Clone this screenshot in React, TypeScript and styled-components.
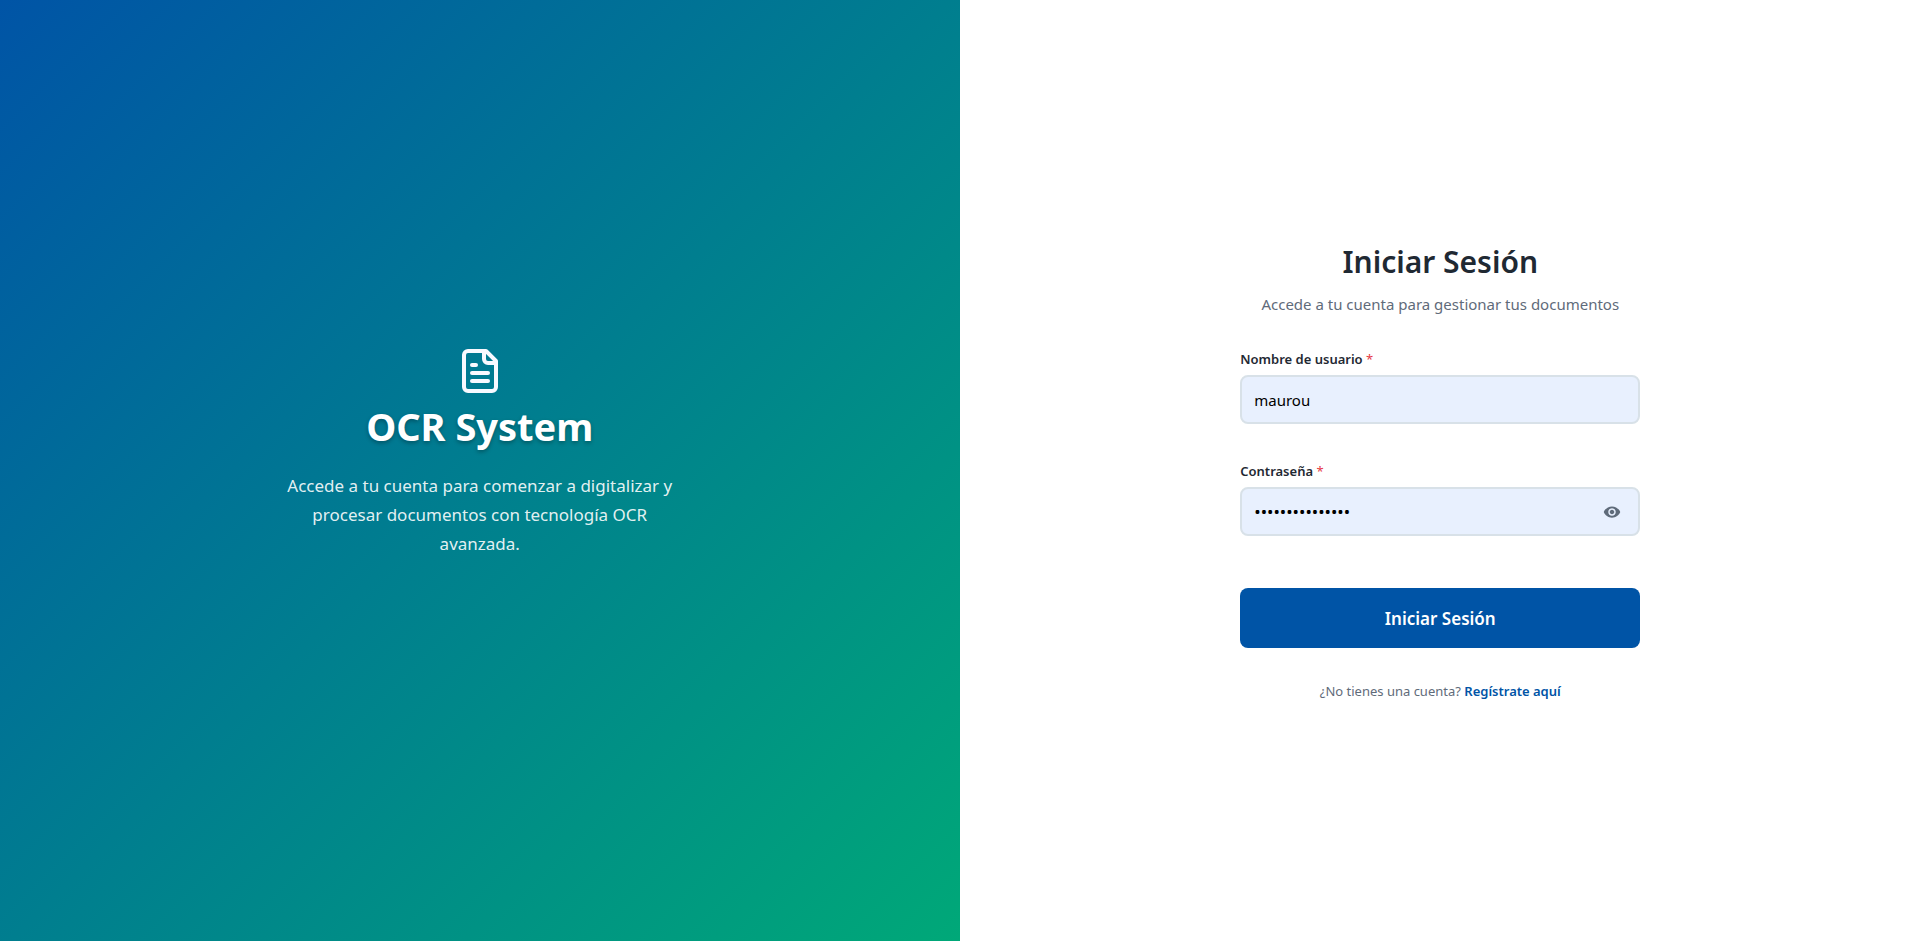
import React, { useState } from "react";
import styled, { createGlobalStyle } from "styled-components";
import { MdVisibility, MdVisibilityOff } from "react-icons/md";

const GlobalStyle = createGlobalStyle`
  *, *::before, *::after { box-sizing: border-box; }
  body {
    margin: 0;
    background: #ffffff;
    color: #1f2933;
    font-family: "Noto Sans", "Open Sans", sans-serif;
  }
  h1, h2, p { margin: 0; }
  input, button { font-family: inherit; }
`;

const Page = styled.div`
  display: grid;
  grid-template-columns: 1fr 1fr;
  min-height: 100vh;
`;

const Brand = styled.section`
  display: flex;
  flex-direction: column;
  align-items: center;
  justify-content: center;
  padding: 32px 32px 68px;
  background: linear-gradient(135deg, #0054a6 0%, #00a878 100%);
  color: #ffffff;
  text-align: center;
`;

const BrandIcon = styled.svg`
  width: 48px;
  height: 48px;
  color: #f8f9ff;
`;

const BrandTitle = styled.h1`
  margin-top: 8px;
  font-size: 38px;
  line-height: 46px;
  font-weight: 700;
  text-shadow: 0 2px 4px rgba(0, 0, 0, 0.3);
`;

const BrandText = styled.p`
  max-width: 400px;
  margin-top: 22px;
  font-size: 17px;
  line-height: 29px;
  color: rgba(255, 255, 255, 0.9);
`;

const Access = styled.main`
  display: flex;
  align-items: center;
  justify-content: center;
  padding: 35px 32px 32px 34px;
`;

const Form = styled.form`
  display: flex;
  flex-direction: column;
  width: 100%;
  max-width: 400px;
`;

const Title = styled.h2`
  font-size: 30px;
  line-height: 40px;
  font-weight: 600;
  text-align: center;
`;

const Subtitle = styled.p`
  margin-top: 10px;
  font-size: 15px;
  line-height: 24px;
  text-align: center;
  color: #5f6b7a;
`;

const Field = styled.div<{ $gap: number }>`
  display: flex;
  flex-direction: column;
  gap: 6px;
  margin-top: ${(p) => p.$gap}px;
`;

const Label = styled.label`
  font-size: 13px;
  line-height: 20px;
  font-weight: 600;
`;

const Required = styled.span`
  color: #e63946;
  font-weight: 400;
`;

const InputWrap = styled.div`
  position: relative;
`;

const Input = styled.input<{ $password?: boolean }>`
  display: block;
  width: 100%;
  height: 49px;
  padding: 0 ${(p) => (p.$password ? 48 : 12)}px 0 12px;
  border: 2px solid #d8e1e8;
  border-radius: 8px;
  outline: none;
  background: #e8f0fe;
  color: #000000;
  font-size: ${(p) => (p.$password ? 17 : 15)}px;
  &:focus { border-color: #0054a6; }
`;

const Toggle = styled.button`
  position: absolute;
  top: 0;
  right: 15px;
  bottom: 0;
  display: flex;
  align-items: center;
  padding: 0 4px;
  border: 0;
  background: none;
  color: #5f6b7a;
  font-size: 18px;
  cursor: pointer;
`;

const Submit = styled.button`
  height: 60px;
  margin-top: 52px;
  border: 0;
  border-radius: 8px;
  background: #0054a6;
  color: #ffffff;
  font-size: 17px;
  font-weight: 600;
  cursor: pointer;
`;

const Register = styled.p`
  margin-top: 32px;
  font-size: 13px;
  line-height: 22px;
  text-align: center;
  color: #5f6b7a;
`;

const RegisterLink = styled.a`
  color: #0054a6;
  font-weight: 600;
  text-decoration: none;
`;

export default function App() {
  const [user, setUser] = useState("maurou");
  const [password, setPassword] = useState("documentos12345");
  const [visible, setVisible] = useState(false);

  return (
    <>
      <GlobalStyle />
      <Page>
        <Brand>
          <BrandIcon
            viewBox="0 0 24 24"
            fill="none"
            stroke="currentColor"
            strokeWidth="2"
            strokeLinecap="round"
            strokeLinejoin="round"
            aria-hidden="true"
          >
            <path d="M15 2H6a2 2 0 0 0-2 2v16a2 2 0 0 0 2 2h12a2 2 0 0 0 2-2V7Z" />
            <path d="M14 2v4a2 2 0 0 0 2 2h4" />
            <path d="M10 9H8" />
            <path d="M16 13H8" />
            <path d="M16 17H8" />
          </BrandIcon>
          <BrandTitle>OCR System</BrandTitle>
          <BrandText>
            Accede a tu cuenta para comenzar a digitalizar y procesar documentos con tecnología OCR avanzada.
          </BrandText>
        </Brand>
        <Access>
          <Form onSubmit={(e) => e.preventDefault()}>
            <Title>Iniciar Sesión</Title>
            <Subtitle>Accede a tu cuenta para gestionar tus documentos</Subtitle>
            <Field $gap={33}>
              <Label htmlFor="user">
                Nombre de usuario <Required>*</Required>
              </Label>
              <Input id="user" type="text" required value={user} onChange={(e) => setUser(e.target.value)} />
            </Field>
            <Field $gap={37}>
              <Label htmlFor="password">
                Contraseña <Required>*</Required>
              </Label>
              <InputWrap>
                <Input
                  id="password"
                  type={visible ? "text" : "password"}
                  required
                  $password
                  value={password}
                  onChange={(e) => setPassword(e.target.value)}
                />
                <Toggle
                  type="button"
                  aria-label={visible ? "Ocultar contraseña" : "Mostrar contraseña"}
                  onClick={() => setVisible(!visible)}
                >
                  {visible ? <MdVisibilityOff /> : <MdVisibility />}
                </Toggle>
              </InputWrap>
            </Field>
            <Submit type="submit">Iniciar Sesión</Submit>
            <Register>
              ¿No tienes una cuenta? <RegisterLink href="#registro">Regístrate aquí</RegisterLink>
            </Register>
          </Form>
        </Access>
      </Page>
    </>
  );
}
